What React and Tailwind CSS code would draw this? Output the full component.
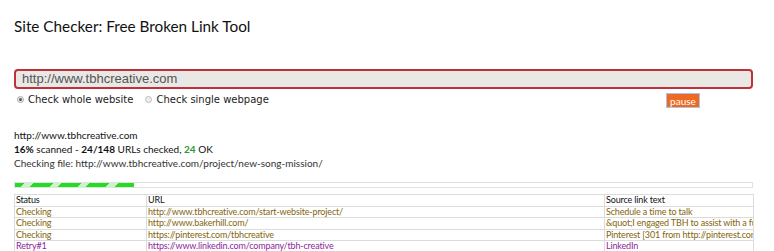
export default function App() {
  const rows = [
    { status: 'Checking', url: 'http://www.tbhcreative.com/start-website-project/', text: 'Schedule a time to talk', retry: false },
    { status: 'Checking', url: 'http://www.bakerhill.com/', text: '&quot;I engaged TBH to assist with a full', retry: false },
    { status: 'Checking', url: 'https://pinterest.com/tbhcreative', text: 'Pinterest [301 from http://pinterest.com/tbhcreative]', retry: false },
    { status: 'Retry#1', url: 'https://www.linkedin.com/company/tbh-creative', text: 'LinkedIn', retry: true },
  ];

  return (
    <div className="h-[251px] w-[774px] overflow-hidden bg-white px-[14px] pt-[16px]" style={{ fontFamily: 'Lato, sans-serif' }}>
      <h1 className="text-[15.3px] leading-[20px] text-[#111]">Site Checker: Free Broken Link Tool</h1>

      <div className="mt-[33px] w-[739px]">
        <div className="h-[20px] rounded-[4px] border-2 border-[#c0303a] bg-[#e9e8e4] pl-[6px] text-[13px] leading-[16px] text-[#555]" style={{ fontFamily: '"Liberation Sans", sans-serif' }}>
          http://www.tbhcreative.com
        </div>
        <div className="flex items-start justify-between">
          <div className="mt-[4px] flex items-center text-[10px] leading-[13px] text-[#222]" style={{ fontFamily: '"DejaVu Sans", sans-serif' }}>
            <span className="ml-[3px] mr-[4px] flex h-[7px] w-[7px] items-center justify-center rounded-full border border-[#aaa] bg-[#eee]">
              <span className="h-[3px] w-[3px] rounded-full bg-[#555]" />
            </span>
            Check whole website
            <span className="ml-[12px] mr-[4px] h-[7px] w-[7px] rounded-full border border-[#bbb] bg-[#eee]" />
            Check single webpage
          </div>
          <div className="mr-[53px] mt-[4px] flex h-[15px] w-[34px] items-center justify-center border border-[#a9c4ea] bg-[#ee6a22] text-[10px] leading-none text-white">
            pause
          </div>
        </div>
      </div>

      <div className="mt-[20px] text-[10px] leading-[14px] text-[#111]">
        <div>http://www.tbhcreative.com</div>
        <div>
          <b>16%</b> scanned - <b>24/148</b> URLs checked, <b className="text-[#2a9a2a]">24</b> OK
        </div>
        <div className="text-[#333]">Checking file: http://www.tbhcreative.com/project/new-song-mission/</div>
      </div>

      <div className="mt-[12px] h-[6px] w-[739px] border border-[#e2e2e2] bg-white">
        <div className="h-full w-[119px] bg-[repeating-linear-gradient(-45deg,#22dd22_0px,#22dd22_14px,#c9f5c9_14px,#c9f5c9_20px)]" />
      </div>

      <table className="mt-[6px] w-[739px] table-fixed border-collapse text-[9px] leading-[10.5px] tracking-[-0.15px]">
        <colgroup>
          <col className="w-[132px]" />
          <col className="w-[458px]" />
          <col className="w-[149px]" />
        </colgroup>
        <tbody>
          <tr className="text-[#111]">
            <td className="border border-[#dcdcdc] px-[1px]">Status</td>
            <td className="border border-[#dcdcdc] px-[1px]">URL</td>
            <td className="border border-[#dcdcdc] px-[1px]">Source link text</td>
          </tr>
          {rows.map((r) => (
            <tr key={r.url} className={r.retry ? 'text-[#8a1f9c]' : 'text-[#83650c]'}>
              <td className="border border-[#dcdcdc] px-[1px]">{r.status}</td>
              <td className="border border-[#dcdcdc] px-[1px]">{r.url}</td>
              <td className="overflow-hidden whitespace-nowrap border border-[#dcdcdc] px-[1px]">{r.text}</td>
            </tr>
          ))}
        </tbody>
      </table>
    </div>
  );
}
